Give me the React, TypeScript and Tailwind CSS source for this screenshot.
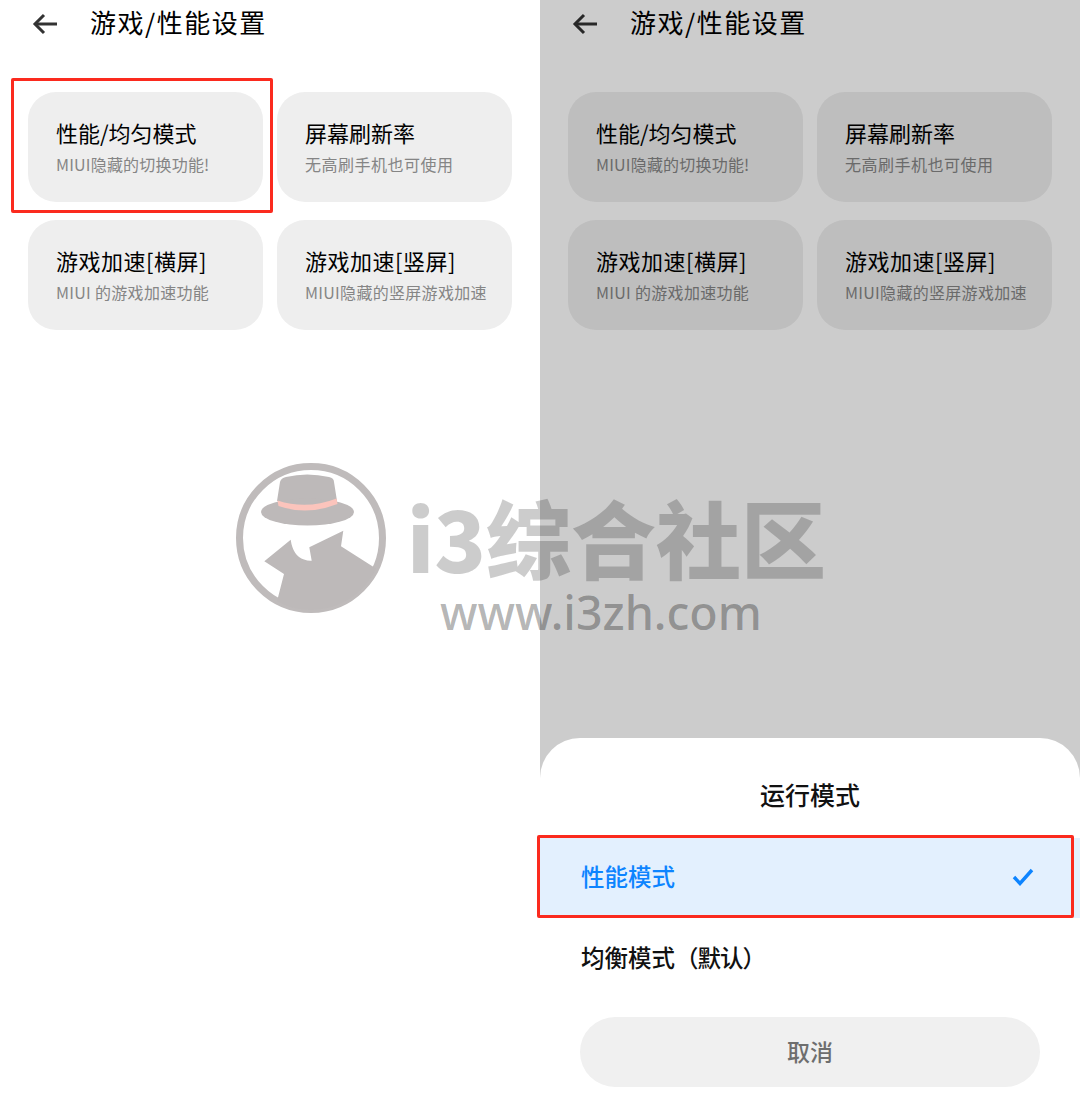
import React from "react";

const cards = [
  { t: "性能/均匀模式", s: "MIUI隐藏的切换功能!", tt: "tracking-[0px]", st: "tracking-[0.2px]" },
  { t: "屏幕刷新率", s: "无高刷手机也可使用", tt: "tracking-[0px]", st: "tracking-[0.5px]" },
  { t: "游戏加速[横屏]", s: "MIUI 的游戏加速功能", tt: "tracking-[0.5px]", st: "tracking-[0.3px]" },
  { t: "游戏加速[竖屏]", s: "MIUI隐藏的竖屏游戏加速", tt: "tracking-[0.5px]", st: "tracking-[0.3px]" },
];

function BackArrow() {
  return (
    <svg width="26" height="22" viewBox="0 0 26 22" fill="none" stroke="#333333" strokeWidth="3">
      <path d="M25 11H3" />
      <path d="M12 2L3 11L12 20" />
    </svg>
  );
}

function Page() {
  return (
    <div className="h-full bg-white">
      <div className="flex h-[47px] items-center pl-[32px]">
        <BackArrow />
        <h1 className="mb-[3px] ml-[32px] text-[26px] leading-none font-normal tracking-[1.5px] text-black">游戏/性能设置</h1>
      </div>
      <div className="mt-[45px] grid grid-cols-2 gap-x-[14px] gap-y-[18px] px-[28px]">
        {cards.map((c) => (
          <div key={c.t} className="flex h-[110px] flex-col rounded-[28px] bg-[#eeeeee] pl-[28px] pt-[25px]">
            <div className={`text-[22px] leading-[30px] text-black ${c.tt}`}>{c.t}</div>
            <div className={`mt-[3.5px] text-[16px] leading-[26px] whitespace-nowrap text-[#858585] ${c.st}`}>{c.s}</div>
          </div>
        ))}
      </div>
    </div>
  );
}

function Logo() {
  return (
    <svg width="150" height="150" viewBox="0 0 150 150">
      <defs>
        <clipPath id="inner">
          <circle cx="75" cy="75" r="72" />
        </clipPath>
      </defs>
      <circle cx="75" cy="75" r="71.5" fill="white" stroke="#bfbbbb" strokeWidth="7" />
      <path d="M41 38L44 19Q45 15 50 14Q71 9 93 14Q98 15 98 19L101 38Z" fill="#bdb9b9" />
      <ellipse cx="71.5" cy="49" rx="46.5" ry="13.5" fill="#bdb9b9" />
      <path d="M41.5 37.5Q71 47 100.5 35.5L101.5 41Q71 53 42.5 43Z" fill="#fbc4bc" />
      <path
        d="M28.3 98.3L54.7 76.7Q57 93 68 96.5Q72 98 75.7 97.7L73.3 84.3L107.3 67.7L105 83.3L150 112L150 150L38 150L42.3 133.3L48 111Z"
        fill="#bdb9b9"
        clipPath="url(#inner)"
      />
    </svg>
  );
}

export default function App() {
  return (
    <div
      className="relative grid h-[1103px] w-[1080px] grid-cols-2 overflow-hidden bg-white"
      style={{ fontFamily: '"Noto Sans CJK SC", "Noto Sans", sans-serif' }}
    >
      <Page />

      <div className="relative">
        <Page />
        <div className="absolute inset-0 flex flex-col justify-end bg-black/20">
          <div className="h-[365px] rounded-t-[40px] bg-white">
            <div className="pt-[39px] text-center text-[25px] leading-[34px] font-medium text-[#111111]">运行模式</div>
            <div className="mt-[27px] flex h-[80px] items-center justify-between bg-[#e3f0fe] pl-[41px] pr-[46px]">
              <span className="mb-[2px] text-[23.5px] font-medium text-[#0d84ff]">性能模式</span>
              <svg width="22" height="18" viewBox="0 0 22 18" fill="none" stroke="#0d84ff" strokeWidth="3.4" className="mb-[2px]">
                <path d="M2 9L8 15.5L20 2" />
              </svg>
            </div>
            <div className="flex h-[81px] items-center pb-[2px] pl-[41px] text-[23.5px] font-medium text-[#111111]">
              均衡模式<span className="tracking-[-1px]">（默认）</span>
            </div>
            <div className="mx-[40px] mt-[18px] flex h-[70px] items-center justify-center rounded-full bg-[#f0f0f0] pb-[2px] text-[23px] font-medium text-[#6e6e6e]">
              取消
            </div>
          </div>
        </div>
      </div>

      {/* red annotation boxes */}
      <div className="pointer-events-none absolute left-[11px] top-[78px] h-[135px] w-[262px] rounded-[2px] border-[3px] border-[#fb2a1e]" />
      <div className="pointer-events-none absolute left-[537px] top-[835px] h-[83px] w-[537px] rounded-[2px] border-[3px] border-[#fb2a1e]" />

      {/* watermark */}
      <div className="pointer-events-none absolute left-[236px] top-[463px]">
        <Logo />
      </div>
      <div className="pointer-events-none absolute left-[407px] top-[491px] whitespace-nowrap text-[85px] leading-[90px] font-black text-black/20">
        i3综合社区
      </div>
      <div
        className="pointer-events-none absolute left-[440px] top-[587px] whitespace-nowrap text-[46.5px] leading-[50px] font-medium text-black/30"
        style={{ fontFamily: '"Noto Sans", sans-serif' }}
      >
        www.i3zh.com
      </div>
    </div>
  );
}
